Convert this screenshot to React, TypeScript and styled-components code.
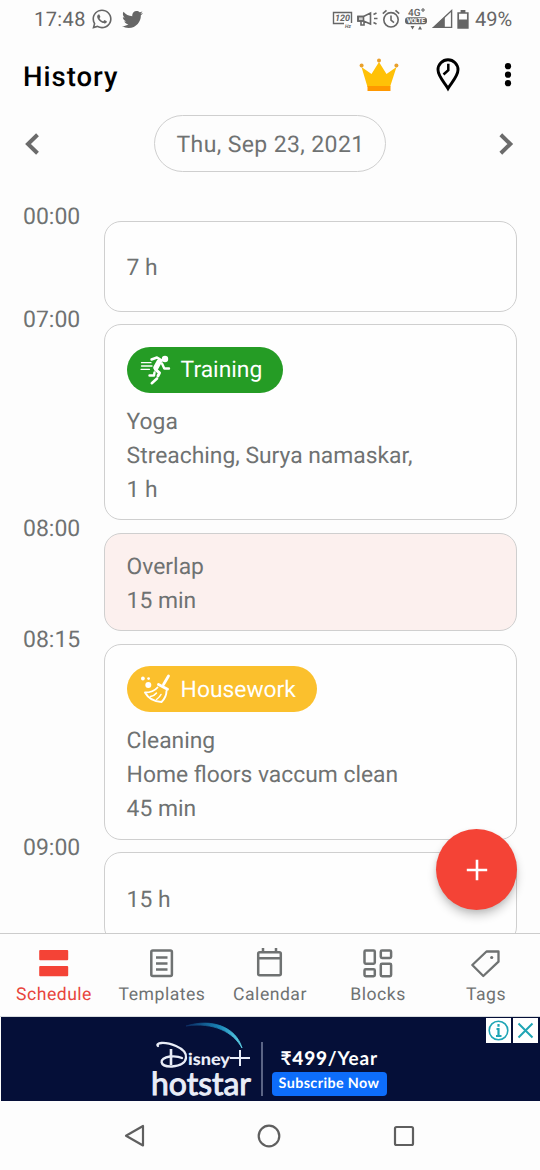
import React from "react";
import styled, { createGlobalStyle } from "styled-components";
import { FaTwitter, FaWhatsapp } from "react-icons/fa";

const GlobalStyle = createGlobalStyle`
  *, *::before, *::after { box-sizing: border-box; }
  html, body { margin: 0; padding: 0; background: #fdfdfd; }
  body { font-family: Roboto, "Noto Sans", sans-serif; color: #6f7272; text-rendering: geometricPrecision; }
  svg { display: block; flex: none; }
`;

const Screen = styled.div`
  width: 540px;
  height: 1170px;
  display: flex;
  flex-direction: column;
  overflow: hidden;
  background: #fdfdfd;
`;

const StatusBar = styled.header`
  height: 40px;
  flex: none;
  display: flex;
  justify-content: space-between;
  padding: 0 26px 2px 34px;
  font-size: 20px;
  color: #666;
`;

const StatusGroup = styled.div<{ $gap: number }>`
  display: flex;
  align-items: center;
  gap: ${(p) => p.$gap}px;
`;

const Clock = styled.span`
  letter-spacing: 0.4px;
  margin-right: -4px;
`;

const Percent = styled.span`
  width: 39px;
  letter-spacing: 0;
  margin-left: 2px;
`;

const AppBar = styled.div`
  height: 72px;
  flex: none;
  display: flex;
  align-items: center;
  padding: 0 24px 0 23px;
`;

const Title = styled.h1`
  margin: 0 auto 0 0;
  font-size: 27.5px;
  font-weight: 500;
  letter-spacing: 1px;
  color: #000;
`;

const ActionIcons = styled.div`
  display: flex;
  align-items: center;
  margin-top: -2px;
`;

const IconButton = styled.button<{ $left: number }>`
  margin: 0 0 0 ${(p) => p.$left}px;
  padding: 0;
  border: 0;
  background: none;
  color: inherit;
`;

const DateRow = styled.div`
  height: 63px;
  flex: none;
  display: flex;
  align-items: center;
  justify-content: space-between;
  padding: 0 25px 0 24px;
`;

const DatePill = styled.div`
  width: 232px;
  height: 57px;
  display: flex;
  align-items: center;
  justify-content: center;
  border: 1.4px solid #cfcfcf;
  border-radius: 29px;
  font-size: 23px;
  letter-spacing: 0.38px;
  padding: 1px 0 0 2px;
`;

const Timeline = styled.main`
  height: 758px;
  flex: none;
  overflow: hidden;
  display: flex;
  flex-direction: column;
  gap: 12.6px;
  padding: 45.6px 23px 0;
`;

const Entry = styled.section`
  display: grid;
  grid-template-columns: 81px 1fr;
  flex: none;
`;

const Time = styled.time`
  height: 26px;
  margin-top: -17px;
  line-height: 26px;
  font-size: 23px;
  letter-spacing: 0;
`;

const Card = styled.article<{ $height: number; $tint?: boolean; $top: number }>`
  height: ${(p) => p.$height}px;
  display: flex;
  flex-direction: column;
  justify-content: center;
  align-items: flex-start;
  padding: ${(p) => p.$top}px 22px 0 21.6px;
  border: 1.4px solid #cfcfcf;
  border-radius: 17px;
  background: ${(p) => (p.$tint ? "#fcf0ee" : "#fefefe")};
`;

const Line = styled.p`
  margin: 0;
  height: 34px;
  line-height: 34px;
  font-size: 22.85px;
  white-space: nowrap;
`;

const Tag = styled.div<{ $color: string; $width: number }>`
  width: ${(p) => p.$width}px;
  height: 46px;
  display: flex;
  align-items: center;
  gap: 9px;
  margin-bottom: 12px;
  padding-left: 13px;
  border-radius: 23px;
  background: ${(p) => p.$color};
  color: #fff;
  font-size: 22.85px;
`;

const BottomNav = styled.nav`
  position: relative;
  height: 84px;
  flex: none;
  display: grid;
  grid-template-columns: repeat(5, 108px);
  border-top: 1.5px solid #cccccc;
  border-bottom: 1px solid #d8dcdf;
  background: #fdfdfd;
`;

const NavItem = styled.a<{ $active?: boolean }>`
  display: flex;
  flex-direction: column;
  align-items: center;
  padding-top: 14px;
  color: ${(p) => (p.$active ? "#e8453c" : "#6f7272")};
  font-size: 17.6px;
  line-height: 24px;
  letter-spacing: 0.5px;
`;

const NavLabel = styled.span`
  margin-top: 1px;
`;

const Fab = styled.button`
  position: absolute;
  right: 23px;
  top: -105px;
  width: 81px;
  height: 81px;
  display: flex;
  align-items: center;
  justify-content: center;
  padding: 0;
  border: 0;
  border-radius: 50%;
  background: #f44336;
  box-shadow: 0 6px 10px rgba(0, 0, 0, 0.2), 0 2px 4px rgba(0, 0, 0, 0.08);
`;

const AdBanner = styled.aside`
  position: relative;
  height: 84px;
  flex: none;
  display: flex;
  padding-left: 150px;
  border-left: 1px solid #fdfdfd;
  background: #050f38;
  color: #fff;
`;

const AdOffer = styled.div`
  display: flex;
  flex-direction: column;
  width: 115px;
  margin-left: 9px;
  padding-top: 30px;
`;

const AdDivider = styled.div`
  width: 1.5px;
  height: 54px;
  margin: 25px 0 0 5px;
  background: #5b6485;
`;

const Price = styled.div`
  height: 25px;
  padding-left: 9px;
  font-family: Lato, "Noto Sans", sans-serif;
  font-size: 19px;
  font-weight: 700;
  line-height: 23px;
  letter-spacing: 0.8px;
  white-space: nowrap;
  b { font-weight: 900; }
`;

const Subscribe = styled.div`
  height: 24px;
  border-radius: 4px;
  background: #0d6dfb;
  font: 700 14.3px/23px Lato, sans-serif;
  letter-spacing: 0.4px;
  text-align: center;
  white-space: nowrap;
`;

const AdChoices = styled.div`
  position: absolute;
  top: 1px;
  right: 2px;
  display: flex;
  gap: 2px;
  svg { background: #fff; }
`;

const SystemNav = styled.footer`
  flex: 1;
  display: flex;
  align-items: center;
  justify-content: space-between;
  padding: 1px 124px 0 122px;
`;

const HzIcon = () => (
  <svg width="21" height="18" viewBox="0 0 21 18">
    <path d="M12 13.500H1.500v-11h18V13" fill="none" stroke="#666" strokeWidth="1.400" />
    <text x="3" y="11.300" fontSize="9" fontWeight="700" fontStyle="italic" fill="#666" textLength="15">120</text>
    <text x="13" y="17.500" fontSize="5" fontWeight="700" fontStyle="italic" fill="#666">Hz</text>
  </svg>
);

const MegaphoneIcon = () => (
  <svg width="21" height="18" viewBox="0 0 21 18" fill="none" stroke="#666" strokeWidth="1.600">
    <path d="M1 6.500h5.500l7-3.500v11l-7-3H1z M4 11v4h3v-3.500" />
    <path d="M1 6.500h5.500V11H1z" fill="#666" fillOpacity=".3" />
    <path d="M16.500 4.500l3-1.500 M17 8.500h3.500 M16.500 12.500l3 1.500" />
  </svg>
);

const AlarmIcon = () => (
  <svg width="18" height="20" viewBox="0 0 18 20" fill="none" stroke="#666" strokeWidth="1.600">
    <circle cx="9" cy="10.800" r="7.200" />
    <path d="M9 6.500v4.700l3 2.500 M.8 4.600L4.500 1.400 M17.200 4.600l-3.700-3.200" />
  </svg>
);

const VolteIcon = () => (
  <svg width="24" height="24" viewBox="0 0 24 24" fill="#666">
    <text x="4" y="8.500" fontSize="10" fontWeight="500" textLength="12.500">4G</text>
    <path d="M17 3h4M19 1v4" stroke="#666" strokeWidth="1.100" />
    <rect x="1" y="10.300" width="22" height="7" rx="3" />
    <text x="3" y="16.300" fontSize="6.600" fontWeight="700" fill="#fff" textLength="18">VOLTE</text>
    <path d="M6.500 19h4l-2 3.400z M14 22.400h4L16 19z" />
  </svg>
);

const SignalIcon = () => (
  <svg width="21" height="20" viewBox="0 0 21 20">
    <path d="M1.500 18.400L19.600 1.600v16.800z" fill="none" stroke="#666" strokeWidth="1.400" />
    <path d="M1 19L12.800 7.800V19z" fill="#666" />
  </svg>
);

const BatteryIcon = () => (
  <svg width="12" height="19" viewBox="0 0 12 19">
    <path d="M1.200 3h9.600v14.800H1.200z" fill="none" stroke="#666" strokeWidth="1.700" />
    <path d="M3.600 0h4.800v3H3.600z M1 9.500h10V18H1z" fill="#666" />
  </svg>
);

const CrownIcon = () => (
  <svg width="40" height="34" viewBox="0 0 40 34">
    <path d="M2.500 9L8.500 29h22.500l6.500-20-10 7-7.500-12-7.500 12z" fill="#ffc107" />
    <path d="M8.500 28h23v5h-23z" fill="#ff9800" />
    <g fill="#e9a02c">
      <circle cx="20" cy="2.600" r="2" />
      <circle cx="2.600" cy="7.600" r="2" />
      <circle cx="37.400" cy="7.600" r="2" />
    </g>
  </svg>
);

const PinIcon = () => (
  <svg width="24" height="34" viewBox="0 0 24 34" fill="none" stroke="#000" strokeWidth="2.900">
    <path d="M12 30.500C9 25 2 18.500 2 11.800a10 10 0 0 1 20 0C22 18.500 15 25 12 30.500z" />
    <path d="M12.300 5.800v6.300L7.500 16.500" strokeWidth="2.500" />
  </svg>
);

const MoreIcon = () => (
  <svg width="16" height="26" viewBox="0 0 16 26" fill="#000">
    <circle cx="8" cy="4.200" r="3.100" />
    <circle cx="8" cy="12.700" r="3.100" />
    <circle cx="8" cy="21.200" r="3.100" />
  </svg>
);

const Chevron = ({ right }: { right?: boolean }) => (
  <svg width="16" height="24" viewBox="0 0 16 24" fill="none" stroke="#6b6b6b" strokeWidth="4">
    <path d={right ? "M1.800 2.800l9.500 9.200-9.500 9.200" : "M13.500 2.800L4 12l9.500 9.200"} />
  </svg>
);

const RunnerIcon = () => (
  <svg width="32" height="32" viewBox="0 0 32 32" fill="none" stroke="#fff" strokeLinecap="round" strokeLinejoin="round">
    <circle cx="25" cy="5" r="3.200" fill="#fff" stroke="none" />
    <path d="M11.500 5.500l5.500-2 5 3" strokeWidth="2.400" />
    <path d="M19.300 7.500L16 13.500" strokeWidth="5.400" />
    <path d="M22 9.500l2.300 5H29" strokeWidth="2.400" />
    <path d="M15.500 15.500l4 3.400-1.500 3" strokeWidth="3" />
    <path d="M14.500 18.500L14 21.500H9.500" strokeWidth="2.400" />
    <path d="M17 24.500l-5.200 4.700" strokeWidth="2.600" />
    <path d="M1.500 8.700h9.500M1.500 12h10.500M1 15.300h8.500" strokeWidth="1.300" />
  </svg>
);

const BroomIcon = () => (
  <svg width="32" height="32" viewBox="0 0 32 32" fill="none" stroke="#fff" strokeLinecap="round" strokeLinejoin="round">
    <path d="M28.500 3l-5 8.500" strokeWidth="2.800" />
    <path d="M18.500 11.500l9 4.700" strokeWidth="2.900" />
    <path d="M17.500 14.500C14.500 18 9.500 19.500 5 19.500c3 5.500 9.500 9 16.500 9.500 3.500-3.500 5-7 5-11" strokeWidth="1.900" />
    <path d="M10.500 23.500c2.500-.5 4.500-1.500 6-3.500M16.500 26.500c2-1.500 3.500-3 4.500-5" strokeWidth="1.500" />
    <g fill="#fff" stroke="none">
      <circle cx="8.300" cy="12" r="3" />
      <circle cx="2.900" cy="5.500" r="1.900" />
      <circle cx="8.600" cy="5.600" r="1.400" />
    </g>
  </svg>
);

const NavIcon = ({ name }: { name: string }) => (
  <svg width="34" height="34" viewBox="0 0 34 34" fill="none" stroke="currentColor" strokeWidth="2.500" strokeLinejoin="round">
    {name === "Schedule" && (
      <g fill="#f44336" stroke="none">
        <rect x="2.200" y="2" width="29" height="10.200" rx="1" />
        <rect x="2.200" y="18" width="29" height="10.200" rx="1" />
      </g>
    )}
    {name === "Templates" && (
      <>
        <rect x="6.300" y="2.500" width="20.600" height="25.600" rx="1.500" />
        <path d="M11 9.500h11.500M11 15.500h11.500M11 21.500h11.500" />
      </>
    )}
    {name === "Calendar" && (
      <>
        <rect x="5.200" y="4.300" width="22.600" height="22.900" rx="1.500" />
        <path d="M5.200 10.300h22.600M10 0v4M23 0v4" />
      </>
    )}
    {name === "Blocks" && (
      <>
        <rect x="3.500" y="2.500" width="10.300" height="13.200" rx="1.200" />
        <rect x="19.800" y="2.500" width="10.300" height="7.500" rx="1.200" />
        <rect x="3.500" y="21.300" width="10.300" height="7" rx="1.200" />
        <rect x="19.800" y="15.700" width="10.300" height="12.600" rx="1.200" />
      </>
    )}
    {name === "Tags" && (
      <>
        <path d="M17.500 3.500h12V13.700L14.300 28 3.300 17z" strokeWidth="2.300" />
        <circle cx="22.700" cy="9.500" r="1.600" fill="currentColor" stroke="none" />
      </>
    )}
  </svg>
);

const PlusIcon = () => (
  <svg width="22" height="22" viewBox="0 0 22 22" stroke="#fff" strokeWidth="2.600">
    <path d="M11 .8v20.400M.8 11h20.400" />
  </svg>
);

const HotstarLogo = () => (
  <svg width="105" height="84" viewBox="1 0 105 84" fill="#e9edf8">
    <defs>
      <linearGradient id="arc" x1="0" x2="1" y1="0" y2="0">
        <stop offset="0" stopColor="#0b2a62" />
        <stop offset=".6" stopColor="#1a86b8" />
        <stop offset="1" stopColor="#5fd4e8" />
      </linearGradient>
    </defs>
    <path d="M36 9C62 1 86 10 92 31 83 15 64 5 36 9z" fill="url(#arc)" stroke="url(#arc)" strokeWidth=".8" />
    <path d="M8 29C5 26 14 24 26 29C40 35 40 48 22 49.500C9 50 8 41 20 39.500C25 39 29 39.500 32 41" fill="none" stroke="#e9edf8" strokeWidth="2.300" strokeLinecap="round" />
    <path d="M21 32v16" stroke="#e9edf8" strokeWidth="2.600" />
    <text x="38" y="47.500" fontFamily="Lato, sans-serif" fontSize="16.500" fontWeight="900" textLength="42" lengthAdjust="spacingAndGlyphs">isney</text>
    <path d="M80 41h20M90 33v16" stroke="#e9edf8" strokeWidth="2" />
    <text x="1" y="77.500" fontFamily="Lato, sans-serif" fontSize="32" fontWeight="400" stroke="#e9edf8" strokeWidth="1" textLength="100" lengthAdjust="spacingAndGlyphs">hotstar</text>
  </svg>
);

type Item = { time: string; height: number; tint?: boolean; tag?: React.ReactNode; lines: string[] };

const items: Item[] = [
  { time: "00:00", height: 91.200, lines: ["7 h"] },
  {
    time: "07:00",
    height: 196,
    tag: <Tag $color="#259c25" $width={156.5}><RunnerIcon />Training</Tag>,
    lines: ["Yoga", "Streaching, Surya namaskar,", "1 h"],
  },
  { time: "08:00", height: 98.300, tint: true, lines: ["Overlap", "15 min"] },
  {
    time: "08:15",
    height: 196,
    tag: <Tag $color="#fbc02d" $width={190.5}><BroomIcon />Housework</Tag>,
    lines: ["Cleaning", "Home floors vaccum clean", "45 min"],
  },
  { time: "09:00", height: 91.200, lines: ["15 h"] },
];

export default function App() {
  return (
    <>
      <GlobalStyle />
      <Screen>
        <StatusBar>
          <StatusGroup $gap={9}>
            <Clock>17:48</Clock>
            <FaWhatsapp size={22} />
            <FaTwitter size={21} />
          </StatusGroup>
          <StatusGroup $gap={4}>
            <HzIcon />
            <MegaphoneIcon />
            <AlarmIcon />
            <VolteIcon />
            <SignalIcon />
            <BatteryIcon />
            <Percent>49%</Percent>
          </StatusGroup>
        </StatusBar>
        <AppBar>
          <Title>History</Title>
          <ActionIcons>
            <IconButton $left={0} aria-label="Premium"><CrownIcon /></IconButton>
            <IconButton $left={37} aria-label="Place and time"><PinIcon /></IconButton>
            <IconButton $left={40} aria-label="More"><MoreIcon /></IconButton>
          </ActionIcons>
        </AppBar>
        <DateRow>
          <Chevron />
          <DatePill>Thu, Sep 23, 2021</DatePill>
          <Chevron right />
        </DateRow>
        <Timeline>
          {items.map((item) => (
            <Entry key={item.time}>
              <Time>{item.time}</Time>
              <Card $height={item.height} $tint={item.tint} $top={item.tag ? 9 : 3}>
                {item.tag}
                {item.lines.map((line) => <Line key={line}>{line}</Line>)}
              </Card>
            </Entry>
          ))}
        </Timeline>
        <BottomNav>
          {["Schedule", "Templates", "Calendar", "Blocks", "Tags"].map((name) => (
            <NavItem key={name} $active={name === "Schedule"}>
              <NavIcon name={name} />
              <NavLabel>{name}</NavLabel>
            </NavItem>
          ))}
          <Fab aria-label="Add"><PlusIcon /></Fab>
        </BottomNav>
        <AdBanner>
          <HotstarLogo />
          <AdDivider />
          <AdOffer>
            <Price>₹<b>499</b>/Year</Price>
            <Subscribe>Subscribe Now</Subscribe>
          </AdOffer>
          <AdChoices>
            <svg width="25" height="25" viewBox="0 0 25 25" fill="none" stroke="#20a5b5" strokeWidth="1.600">
              <circle cx="12.500" cy="12.500" r="9.300" />
              <path d="M12.500 6v2.800M10.500 11h2v7M10 18h5.500" strokeWidth="2.200" />
            </svg>
            <svg width="25" height="25" viewBox="0 0 25 25" fill="none" stroke="#20a5b5" strokeWidth="2">
              <path d="M5.500 5.500l14 14M19.500 5.500l-14 14" />
            </svg>
          </AdChoices>
        </AdBanner>
        <SystemNav>
          <svg width="24" height="26" viewBox="0 0 24 26" fill="none" stroke="#5f5f5f" strokeWidth="2.200" strokeLinejoin="round">
            <path d="M21 3v19.500L4 12.800z" />
          </svg>
          <svg width="24" height="24" viewBox="0 0 24 24" fill="none" stroke="#5f5f5f" strokeWidth="2.200">
            <circle cx="12" cy="12" r="10.300" />
          </svg>
          <svg width="24" height="24" viewBox="0 0 24 24" fill="none" stroke="#5f5f5f" strokeWidth="2.200">
            <rect x="3" y="3" width="18" height="18" rx="1.500" />
          </svg>
        </SystemNav>
      </Screen>
    </>
  );
}
